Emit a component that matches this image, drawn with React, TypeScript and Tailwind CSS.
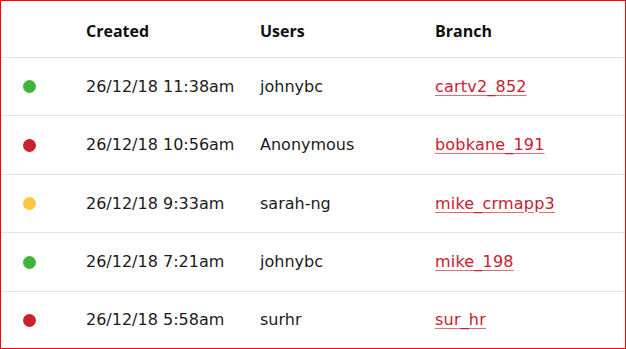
const rows = [
  { status: 'green', created: '26/12/18 11:38am', user: 'johnybc', branch: 'cartv2_852', h: 'h-[58px]' },
  { status: 'red', created: '26/12/18 10:56am', user: 'Anonymous', branch: 'bobkane_191', h: 'h-[59px]' },
  { status: 'yellow', created: '26/12/18 9:33am', user: 'sarah-ng', branch: 'mike_crmapp3', h: 'h-[58px]' },
  { status: 'green', created: '26/12/18 7:21am', user: 'johnybc', branch: 'mike_198', h: 'h-[59px]' },
  { status: 'red', created: '26/12/18 5:58am', user: 'surhr', branch: 'sur_hr', h: 'h-[56px]' },
];

const dotColor: Record<string, string> = {
  green: 'bg-[#3eb63e]',
  red: 'bg-[#c8222f]',
  yellow: 'bg-[#fdc83d]',
};

export default function App() {
  return (
    <div
      className="w-[626px] h-[349px] bg-white border border-[#ff0000] overflow-hidden text-[16px] text-[#1b1b1b]"
      style={{ fontFamily: '"DejaVu Sans", sans-serif' }}
    >
      <div
        className="grid grid-cols-[85px_174px_175px_1fr] items-center h-[57px] pt-[3px] border-b border-[#e4e4e4] font-bold text-[#111]"
        style={{ fontFamily: '"Open Sans", sans-serif' }}
      >
        <div />
        <div>Created</div>
        <div>Users</div>
        <div>Branch</div>
      </div>
      {rows.map((r, i) => (
        <div
          key={i}
          className={`grid grid-cols-[85px_174px_175px_1fr] items-center ${r.h} ${i < rows.length - 1 ? 'border-b border-[#e4e4e4]' : ''}`}
        >
          <div className="pl-[22px]">
            <span className={`block w-[13px] h-[13px] rounded-full ${dotColor[r.status]}`} />
          </div>
          <div>{r.created}</div>
          <div>{r.user}</div>
          <div>
            <a
              href="#"
              className="text-[#c8202f] underline decoration-[#d9707a] underline-offset-[3px] tracking-[0.2px]"
            >
              {r.branch}
            </a>
          </div>
        </div>
      ))}
    </div>
  );
}
